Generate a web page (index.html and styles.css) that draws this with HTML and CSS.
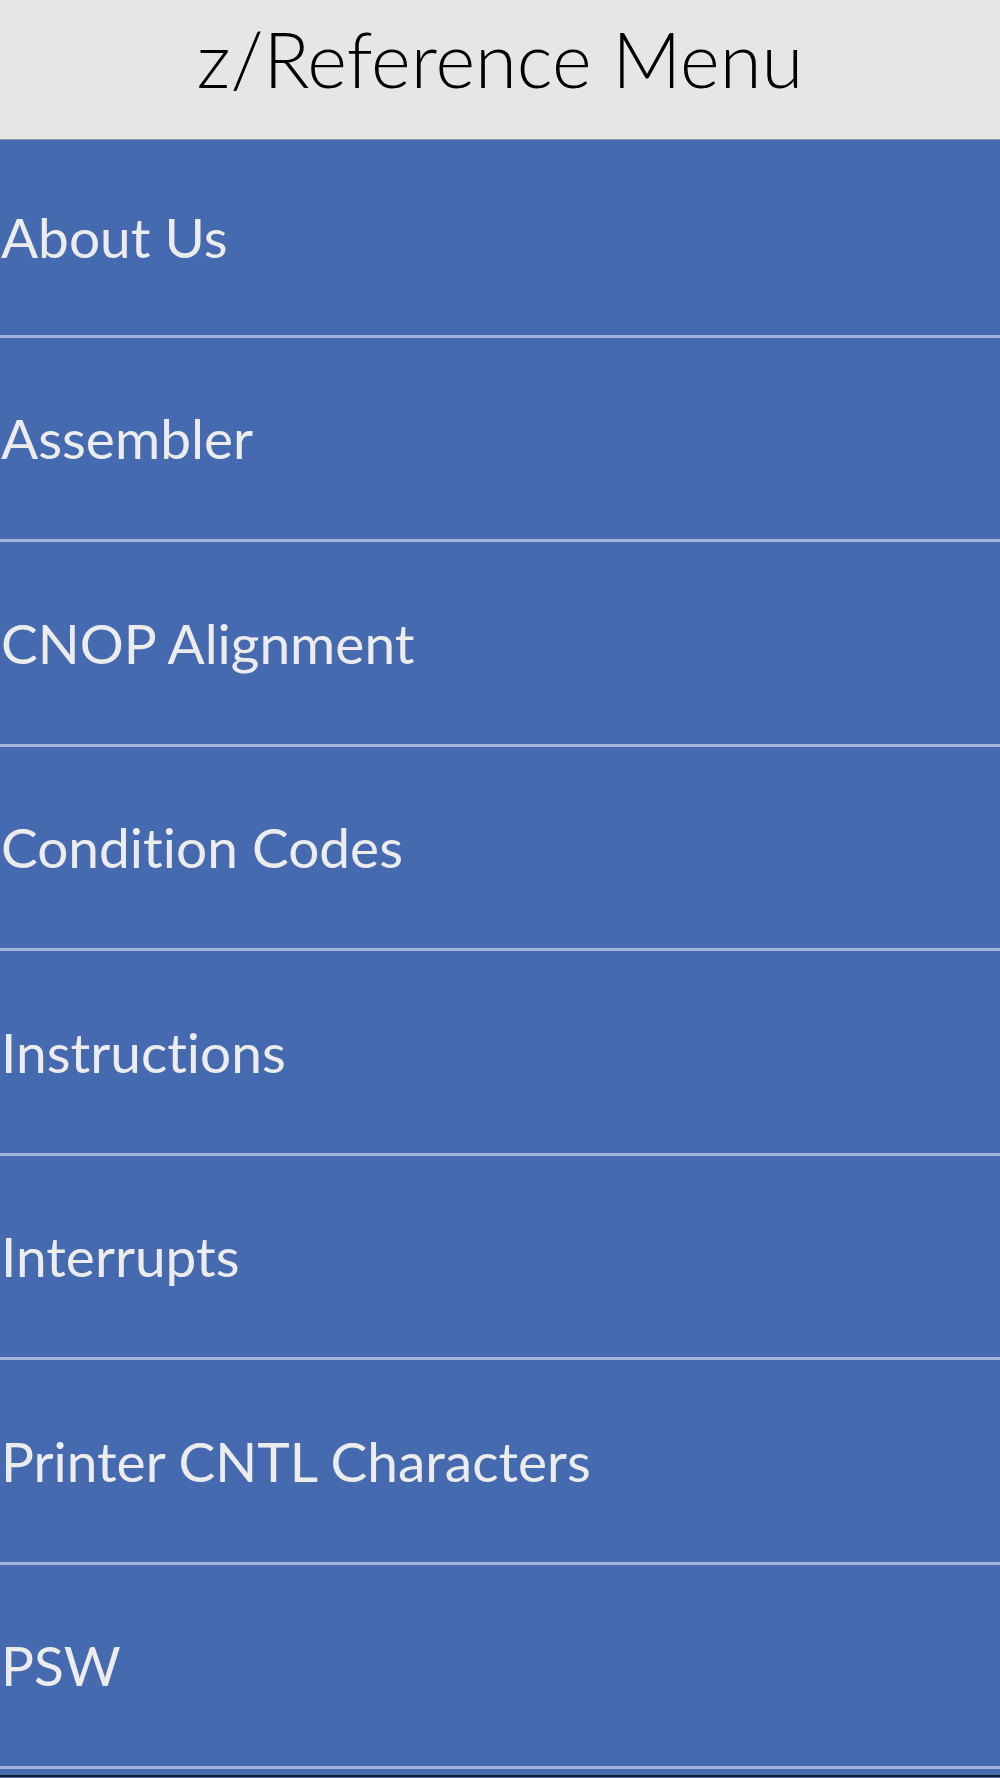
FILE: index.html
```html
<!DOCTYPE html>
<html lang="en">
<head>
    <meta charset="UTF-8">
    <meta name="viewport" content="width=device-width, initial-scale=1.0">
    <title>z/Reference Menu</title>
    <link rel="stylesheet" href="styles.css">
</head>
<body>

    <header class="topbar">
        <h1>z/Reference Menu</h1>
    </header>

    <ul class="menu">
        <li><a href="#">About Us</a></li>
        <li><a href="#">Assembler</a></li>
        <li><a href="#">CNOP Alignment</a></li>
        <li><a href="#">Condition Codes</a></li>
        <li><a href="#">Instructions</a></li>
        <li><a href="#">Interrupts</a></li>
        <li><a href="#">Printer CNTL Characters</a></li>
        <li><a href="#">PSW</a></li>
    </ul>

    <div class="tabbar"></div>

</body>
</html>
```

FILE: styles.css
```css
/* base */
body {
    font-family: Lato, "Noto Sans", sans-serif;
    font-variant-ligatures: none;
    background: #466ab0;
    margin: 0;
    padding: 0;
}

.topbar {
    height: 140px;
    box-sizing: border-box;
    padding-bottom: 22px;
    background: #e6e6e6;
    border-bottom: 1px solid #8b98b4;
    display: flex;
    align-items: center;
    justify-content: center;
}
.topbar h1 { margin: 0; font-size: 76px; font-weight: 300; color: #000; line-height: 1; }

.menu { list-style: none; margin: 0; padding: 0; }
.menu li {
    height: 201.5px;
    border-bottom: 3px solid #a4b4d8;
    display: flex;
    align-items: center;
    padding-left: 1px;
}
.menu li:first-child { height: 194.5px; }
.menu a { color: #ececec; text-decoration: none; font-size: 55px; }

.tabbar { height: 2px; margin-top: 6px; background: #141c2c; }
```
